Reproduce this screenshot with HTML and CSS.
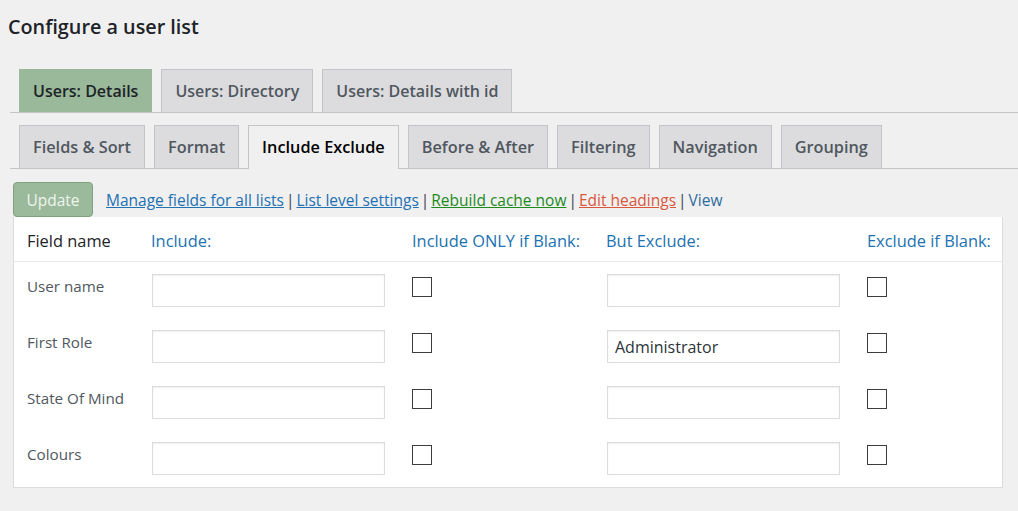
FILE: index.html
```html
<!DOCTYPE html>
<html>
<head>
<meta charset="utf-8">
<link rel="stylesheet" href="styles.css">
</head>
<body>
<div class="wrap">
  <h1 class="title">Configure a user list</h1>
  <nav class="tabs tabs-top">
    <a class="tab tab-current-list">Users: Details</a>
    <a class="tab">Users: Directory</a>
    <a class="tab">Users: Details with id</a>
  </nav>
  <nav class="tabs tabs-sub">
    <a class="tab">Fields &amp; Sort</a>
    <a class="tab">Format</a>
    <a class="tab tab-active">Include Exclude</a>
    <a class="tab">Before &amp; After</a>
    <a class="tab">Filtering</a>
    <a class="tab">Navigation</a>
    <a class="tab">Grouping</a>
  </nav>
  <div class="actions">
    <button class="btn-update">Update</button>
    <div class="links">
      <a class="lnk lnk-blue">Manage fields for all lists</a><span class="sep">|</span><a class="lnk lnk-blue">List level settings</a><span class="sep">|</span><a class="lnk lnk-green">Rebuild cache now</a><span class="sep">|</span><a class="lnk lnk-red">Edit headings</a><span class="sep">|</span><a class="lnk-view">View</a>
    </div>
  </div>
  <div class="card">
    <div class="grid head">
      <div class="h-dark">Field name</div>
      <div class="h-blue">Include:</div>
      <div class="h-blue">Include ONLY if Blank:</div>
      <div class="h-blue">But Exclude:</div>
      <div class="h-blue">Exclude if Blank:</div>
    </div>
    <div class="rows">
      <div class="grid row">
        <div class="lbl">User name</div>
        <div><input class="inp" type="text"></div>
        <div><span class="chk"></span></div>
        <div><input class="inp" type="text"></div>
        <div><span class="chk"></span></div>
      </div>
      <div class="grid row">
        <div class="lbl">First Role</div>
        <div><input class="inp" type="text"></div>
        <div><span class="chk"></span></div>
        <div><input class="inp" type="text" value="Administrator"></div>
        <div><span class="chk"></span></div>
      </div>
      <div class="grid row">
        <div class="lbl">State Of Mind</div>
        <div><input class="inp" type="text"></div>
        <div><span class="chk"></span></div>
        <div><input class="inp" type="text"></div>
        <div><span class="chk"></span></div>
      </div>
      <div class="grid row">
        <div class="lbl">Colours</div>
        <div><input class="inp" type="text"></div>
        <div><span class="chk"></span></div>
        <div><input class="inp" type="text"></div>
        <div><span class="chk"></span></div>
      </div>
    </div>
  </div>
</div>
</body>
</html>
```
FILE: styles.css
```css
* { box-sizing: border-box; }
html, body { margin: 0; padding: 0; }
body {
  background: #f0f0f1;
  font-family: "Open Sans", "Noto Sans", sans-serif;
  color: #3c434a;
  width: 1018px;
  height: 511px;
  overflow: hidden;
}
.title {
  margin: 0;
  padding: 13px 0 0 8px;
  font-size: 19.8px;
  font-weight: 600;
  line-height: 28px;
  color: #1d2327;
  height: 69px;
}
.tabs {
  display: flex;
  gap: 9px;
  margin-left: 10px;
  padding-left: 9px;
  border-bottom: 1px solid #c3c4c7;
}
.tab {
  display: block;
  height: 43px;
  line-height: 42px;
  padding: 0 13px;
  font-size: 16.3px;
  font-weight: 600;
  color: #50575e;
  background: #dcdcde;
  border: 1px solid #c3c4c7;
  border-bottom: none;
  white-space: nowrap;
}
.tabs-top .tab { font-size: 16px; }
.tab-current-list { background: #9ab89a; color: #1d2327; border-color: #9ab89a; }
.tabs-sub { margin-top: 12px; }
.tab-active { background: #f0f0f1; color: #000; margin-bottom: -1px; height: 44px; }
.actions {
  display: flex;
  align-items: center;
  gap: 13px;
  margin-top: 13px;
  padding-left: 13px;
  height: 35px;
}
.btn-update {
  font-family: inherit;
  font-size: 15.5px;
  height: 35px;
  width: 80px;
  padding: 0;
  background: #9bb99b;
  color: #eef4ee;
  border: 1px solid #80a080;
  border-radius: 4px;
}
.links { font-size: 15.5px; color: #3c434a; }
.lnk { text-decoration: underline; }
.lnk-blue { color: #2271b1; }
.lnk-green { color: #1e8a1e; }
.lnk-red { color: #d9573b; }
.lnk-view { color: #2e6c9c; }
.sep { margin: 0 2px; color: #3c434a; }
.card {
  margin-left: 13px;
  width: 990px;
  background: #fff;
  border: 1px solid #dcdcde;
  border-top: none;
}
.grid {
  display: grid;
  grid-template-columns: 124px 261px 194px 261px 1fr;
  padding-left: 13px;
}
.head {
  height: 45px;
  align-items: center;
  border-bottom: 1px solid #e8e8e8;
  font-size: 16.4px;
  padding-top: 2px;
}
.h-dark { color: #1d2327; }
.h-blue { color: #2271b1; }
.rows { padding: 12px 0 12px 0; display: flex; flex-direction: column; gap: 23px; }
.row { height: 33px; }
.lbl { font-size: 15.2px; color: #50575e; padding-top: 2px; }
.inp {
  display: block;
  width: 233px;
  height: 33px;
  margin-left: 1px;
  border: 1px solid #dcdcde;
  box-shadow: inset 0 1px 2px rgba(0,0,0,0.07);
  font-family: inherit;
  font-size: 16px;
  padding: 0 7px;
  color: #2c3338;
  background: #fff;
}
.chk {
  display: block;
  width: 20px;
  height: 20px;
  margin-top: 3px;
  border: 1px solid #3c3c3c;
  background: #fff;
}
```
